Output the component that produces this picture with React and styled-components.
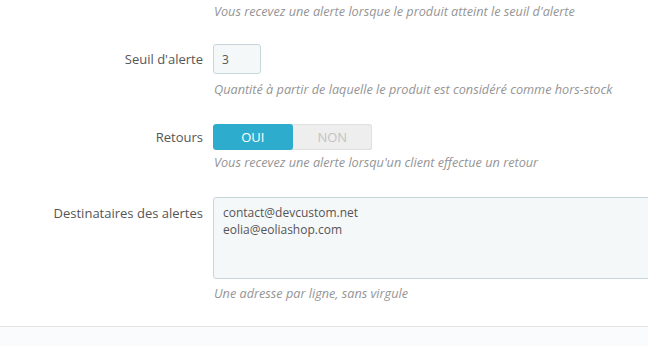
import React from "react";
import styled, { createGlobalStyle } from "styled-components";

const GlobalStyle = createGlobalStyle`
  html, body {
    margin: 0;
    padding: 0;
    background: #fff;
    overflow: hidden;
  }
  body {
    font-family: "Open Sans", "Liberation Sans", sans-serif;
    font-size: 13px;
    color: #555;
  }
`;

const Page = styled.div`
  width: 648px;
  height: 346px;
  display: flex;
  flex-direction: column;
  overflow: hidden;
`;

const Form = styled.div`
  padding-top: 2px;
  flex: 1;
`;

const Group = styled.div`
  display: grid;
  grid-template-columns: 203px 1fr;
  column-gap: 10px;
  margin-bottom: ${(p) => p.$gap}px;
`;

const Label = styled.label`
  text-align: right;
  line-height: 18px;
  font-size: 13px;
  padding-top: ${(p) => p.$top || 0}px;
  color: #555;
`;

const Control = styled.div`
  display: flex;
  flex-direction: column;
  align-items: flex-start;
  min-width: 0;
`;

const Help = styled.p`
  margin: ${(p) => p.$top || 0}px 0 0;
  padding-left: 1px;
  line-height: 18px;
  font-size: 12.7px;
  font-style: italic;
  color: #959595;
  white-space: nowrap;
`;

const SmallInput = styled.input`
  box-sizing: border-box;
  width: 48px;
  height: 30px;
  padding: 0 8px;
  border: 1px solid #c7d6db;
  border-radius: 3px;
  background: #f5f8f9;
  font-family: inherit;
  font-size: 12px;
  color: #555;
  outline: none;
`;

const Switch = styled.div`
  display: flex;
  width: 159px;
  height: 26px;
  border-radius: 3px;
  background: #eee;
  box-shadow: inset 0 0 0 1px #e0e0e0, inset 0 -1px 0 #dcdcdc;
  overflow: hidden;
`;

const SwitchOption = styled.span`
  flex: 1;
  display: flex;
  align-items: center;
  justify-content: center;
  font-size: 13px;
  text-transform: uppercase;
  border-radius: 3px;
  color: ${(p) => (p.$active ? "#fff" : "#c3c3c3")};
  background: ${(p) => (p.$active ? "#2eacce" : "transparent")};
`;

const TextArea = styled.textarea`
  box-sizing: border-box;
  width: 470px;
  height: 82px;
  padding: 6px 9px;
  border: 1px solid #c7d6db;
  border-radius: 3px;
  background: #f5f8f9;
  font-family: inherit;
  font-size: 12px;
  line-height: 17px;
  color: #555;
  resize: none;
  outline: none;
`;

const Footer = styled.div`
  height: 19px;
  border-top: 1px solid #e6e6e6;
  background: #fafbfc;
`;

export default function App() {
  return (
    <Page>
      <GlobalStyle />
      <Form>
        <Group $gap={24}>
          <span />
          <Control>
            <Help>Vous recevez une alerte lorsque le produit atteint le seuil d'alerte</Help>
          </Control>
        </Group>

        <Group $gap={26}>
          <Label $top={6}>Seuil d'alerte</Label>
          <Control>
            <SmallInput defaultValue="3" />
            <Help $top={6}>Quantité à partir de laquelle le produit est considéré comme hors-stock</Help>
          </Control>
        </Group>

        <Group $gap={26}>
          <Label $top={4}>Retours</Label>
          <Control>
            <Switch>
              <SwitchOption $active>Oui</SwitchOption>
              <SwitchOption>Non</SwitchOption>
            </Switch>
            <Help $top={3}>Vous recevez une alerte lorsqu'un client effectue un retour</Help>
          </Control>
        </Group>

        <Group $gap={0}>
          <Label $top={7}>Destinataires des alertes</Label>
          <Control>
            <TextArea defaultValue={"contact@devcustom.net\neolia@eoliashop.com"} />
            <Help $top={5}>Une adresse par ligne, sans virgule</Help>
          </Control>
        </Group>
      </Form>
      <Footer />
    </Page>
  );
}
